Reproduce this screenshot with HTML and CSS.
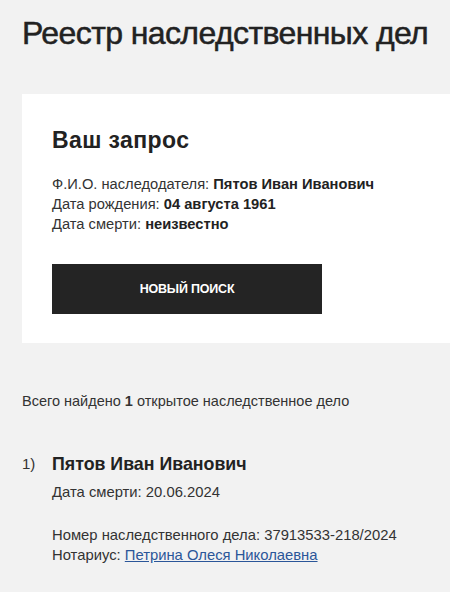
FILE: index.html
```html
<!DOCTYPE html>
<html lang="ru">
<head>
<meta charset="utf-8">
<link rel="stylesheet" href="styles.css">
</head>
<body>
<div class="page">
  <h1 class="title">Реестр наследственных дел</h1>
  <section class="card">
    <h2 class="card-title">Ваш запрос</h2>
    <div class="info">
      <div>Ф.И.О. наследодателя: <b>Пятов Иван Иванович</b></div>
      <div>Дата рождения: <b>04 августа 1961</b></div>
      <div>Дата смерти: <b>неизвестно</b></div>
    </div>
    <button class="btn">Новый поиск</button>
  </section>
  <p class="summary">Всего найдено <b>1</b> открытое наследственное дело</p>
  <div class="result">
    <div class="num">1)</div>
    <div class="body">
      <div class="name">Пятов Иван Иванович</div>
      <div class="line">Дата смерти: 20.06.2024</div>
      <div class="group">
        <div class="line">Номер наследственного дела: 37913533-218/2024</div>
        <div class="line">Нотариус: <a href="#" class="link">Петрина Олеся Николаевна</a></div>
      </div>
    </div>
  </div>
</div>
</body>
</html>
```

FILE: styles.css
```css
* { box-sizing: border-box; }
html, body { margin: 0; padding: 0; background: #f2f2f2; }
body {
  font-family: "Liberation Sans", Arial, sans-serif;
  color: #222;
  width: 450px;
  height: 592px;
  overflow: hidden;
}
.page { padding: 13px 0 0 22px; }
.title {
  margin: 0;
  font-size: 32px;
  font-weight: 400;
  line-height: 40px;
  letter-spacing: -0.6px;
  -webkit-text-stroke: 0.5px #222;
}
.card {
  margin-top: 41px;
  background: #fff;
  padding: 32px 30px 30px;
  height: 249px;
}
.card-title {
  margin: 0;
  font-size: 23px;
  font-weight: 700;
  line-height: 28px;
  letter-spacing: 0.4px;
}
.info {
  margin-top: 20px;
  font-size: 14.7px;
  line-height: 20px;
  color: #333;
}
.info b { color: #222; }
.btn {
  margin-top: 30px;
  display: flex;
  align-items: center;
  justify-content: center;
  width: 270px;
  height: 50px;
  border: 0;
  background: #242424;
  color: #fff;
  font-family: "Liberation Sans", Arial, sans-serif;
  font-weight: 700;
  font-size: 12.5px;
  text-transform: uppercase;
  letter-spacing: -0.2px;
}
.summary {
  margin: 48px 0 0;
  font-size: 14.5px;
  line-height: 20px;
  color: #333;
}
.result {
  display: flex;
  margin-top: 41px;
}
.num {
  width: 30px;
  font-size: 15px;
  line-height: 24px;
  color: #333;
}
.name {
  font-size: 17.8px;
  font-weight: 700;
  line-height: 24px;
}
.line {
  font-size: 14.8px;
  line-height: 20px;
  color: #333;
}
.body > .line { margin-top: 6px; }
.group { margin-top: 23px; }
.link { color: #2b5699; text-decoration: underline; }
```
